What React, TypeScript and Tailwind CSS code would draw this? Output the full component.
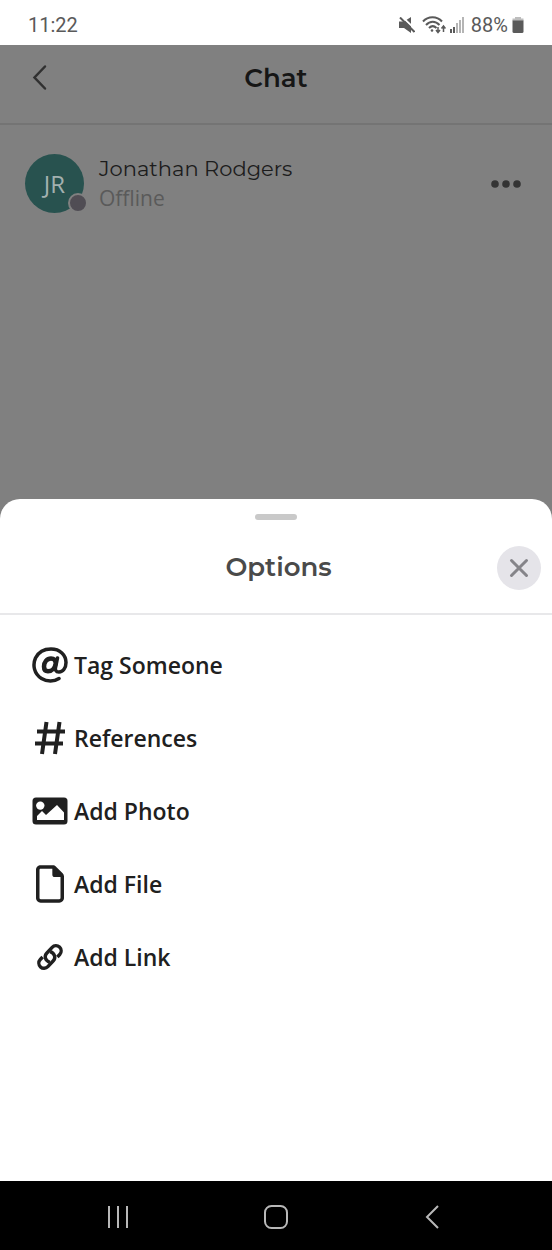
import type { ReactNode } from "react";
import { FaRegFile } from "react-icons/fa6";

type Option = {
  label: string;
  icon: ReactNode;
};

const options: Option[] = [
  {
    label: "Tag Someone",
    icon: (
      <svg className="size-9" viewBox="0 0 36 36" fill="none" stroke="currentColor" strokeLinecap="round">
        <path d="M27 31.500C22 34.800 15 34.800 9.500 31.500C2 27 .4 18 3.500 11C7 4 13 2 19 2C28 2 34 8 34 15.500C34 21 31 25 27 25C23.500 25 23 22.500 23.600 20L25.500 11" strokeWidth="3.500" />
        <path d="M23.800 16C23.600 13 22 11.500 19 11.500C14.800 11.500 12 15.300 12 19.500C12 22.600 13.600 24.300 16 24.300C20 24.300 23 21 23.800 16Z" strokeWidth="4.500" />
      </svg>
    ),
  },
  {
    label: "References",
    icon: (
      <svg className="h-9 w-8" viewBox="0 0 32 36" fill="none" stroke="currentColor" strokeWidth="4">
        <path d="M12.500 2 8 34M25.500 2 21 34M3 11.500H31M1 23.500H29" />
      </svg>
    ),
  },
  {
    label: "Add Photo",
    icon: (
      <svg className="h-7 w-9" viewBox="0 0 36 28">
        <rect x="0.5" y="0.5" width="35" height="27" rx="3.500" fill="currentColor" />
        <circle cx="8.300" cy="8.600" r="4.200" fill="#fff" />
        <path d="M5 23v-4l5-5 4 4L25 8l7 7.500V23z" fill="#fff" />
      </svg>
    ),
  },
  { label: "Add File", icon: <FaRegFile className="h-[38px] w-7" /> },
  {
    label: "Add Link",
    icon: (
      <svg className="size-7" viewBox="0 0 28 28" fill="none" stroke="currentColor" strokeWidth="3.400">
        <g transform="rotate(-47 14 14)">
          <path d="M10 17.500C8 13 10.500 9 14.500 9H22.500a5.200 5.200 0 0 1 0 10.400H19" />
          <path d="M18 10.500C20 15 17.500 19 13.500 19H5.500a5.200 5.200 0 0 1 0-10.400H9" />
        </g>
      </svg>
    ),
  },
];

function StatusBar() {
  return (
    <div className="flex h-[45px] shrink-0 items-center justify-between bg-white px-7 pt-1 font-[Roboto,sans-serif] text-xl text-[#5a5a5a]">
      <span>11:22</span>
      <div className="flex items-center">
        <svg className="mr-[7px] h-4 w-4" viewBox="0 0 16 16" fill="currentColor">
          <path d="M0 4.500h5L12 0v16l-7-5H0z" />
          <path d="M3.500 0 17 13" stroke="#fff" strokeWidth="1.800" />
          <path d="M1 .5 15.500 15" stroke="currentColor" strokeWidth="2" />
        </svg>
        <svg className="mr-1 h-[18px] w-6" viewBox="0 0 24 18" fill="none" stroke="currentColor" strokeWidth="2">
          <path d="M1 5.500C6-.2 15-.2 20 5.500M4 9c4-4.300 9.500-4.300 13.500 0M7 12c2.500-2.500 5-2.500 7.500 0" />
          <circle cx="10" cy="14.500" r="1.300" fill="currentColor" stroke="none" />
          <path d="M16 11v5M14 14l2 2.500 2-2.500M21.500 16v-6M19.500 12.500l2-2.500 2 2.500" strokeWidth="1.500" />
        </svg>
        <svg className="mr-[7px] h-4 w-[14px]" viewBox="0 0 14 16" fill="currentColor">
          <path d="M0 12h2v4H0zM3 10h2v6H3z" />
          <path d="M6 6h2v10H6zM9 3h2v13H9zM12 0h2v16h-2z" opacity=".45" />
        </svg>
        <span>88%</span>
        <svg className="ml-1 h-4 w-3" viewBox="0 0 12 16" fill="currentColor">
          <path d="M3 0h6v1.500h2.500V4H.5V1.500H3z" opacity=".4" />
          <path d="M.5 3.500h11v11q0 1.500-1.500 1.500H2q-1.500 0-1.500-1.500z" />
        </svg>
      </div>
    </div>
  );
}

function Chat() {
  return (
    <main className="grow-2 basis-0">
      <header className="grid h-20 grid-cols-3 items-center border-b-2 border-[#747474] pb-3">
        <button aria-label="Back" className="ml-7 flex size-6 items-center justify-center text-[#303030]">
          <svg className="h-7 w-4" viewBox="0 0 16 28" fill="none" stroke="currentColor" strokeWidth="2.500" strokeLinecap="round">
            <path d="M13 2.500 2.500 13.500 13 24.500" />
          </svg>
        </button>
        <h1 className="text-center font-[Montserrat,Inter,sans-serif] text-[26px] font-semibold text-[#161616]">Chat</h1>
      </header>
      <section className="flex items-center px-[25px] pt-[29px]">
        <div className="relative flex size-[59px] items-center justify-center rounded-full bg-[#28524f] text-2xl text-[#a3b0af]">
          JR
          <span className="absolute -right-1 bottom-0 size-5 rounded-full border-2 border-[#808080] bg-[#504d54]" />
        </div>
        <div className="ml-[15px] flex-1">
          <h2 className="font-[Montserrat,Inter,sans-serif] text-[21px] leading-7 text-[#1c1c1c]">Jonathan Rodgers</h2>
          <p className="text-[21px] leading-[30px] text-[#5a5a5a]">Offline</p>
        </div>
        <button aria-label="More" className="mr-[6px] text-[#343434]">
          <svg className="h-2 w-[30px]" viewBox="0 0 30 8" fill="currentColor">
            <circle cx="4" cy="4" r="3.800" />
            <circle cx="15" cy="4" r="3.800" />
            <circle cx="26" cy="4" r="3.800" />
          </svg>
        </button>
      </section>
    </main>
  );
}

function OptionsSheet() {
  return (
    <section aria-labelledby="options-title" className="grow-3 basis-0 rounded-t-[20px] bg-white">
      <div className="flex h-[35px] justify-center pt-[15px]">
        <div className="h-[6px] w-[42px] rounded-full bg-[#c9c9c9]" />
      </div>
      <div className="flex h-[81px] items-center border-b-2 border-[#e8e8ea] pr-[11px] pb-3">
        <h2 id="options-title" className="ml-[60px] flex-1 text-center font-[Montserrat,Inter,sans-serif] text-[26px] font-semibold text-[#4a4a4a]">
          Options
        </h2>
        <button aria-label="Close" className="flex size-11 items-center justify-center rounded-full bg-[#e5e4e9] text-[#858489]">
          <svg className="size-5" viewBox="0 0 20 20" fill="none" stroke="currentColor" strokeWidth="3" strokeLinecap="round">
            <path d="m2.500 2.500 15 15M17.500 2.500l-15 15" />
          </svg>
        </button>
      </div>
      <ul className="px-8 pt-[13px] text-[#202020]">
        {options.map((option) => (
          <li key={option.label}>
            <button className="flex h-[73px] w-full items-center gap-[6px] text-[23px] font-semibold">
              <span className="flex w-9 justify-center">{option.icon}</span>
              {option.label}
            </button>
          </li>
        ))}
      </ul>
    </section>
  );
}

function NavBar() {
  return (
    <nav className="flex h-[69px] shrink-0 items-center justify-between bg-black px-[104px] pt-[2px] text-[#b8b8b8]">
      <button aria-label="Recent apps">
        <svg className="h-6 w-7" viewBox="0 0 28 24" stroke="currentColor" strokeWidth="2">
          <path d="M5 1v22M14 1v22M23 1v22" />
        </svg>
      </button>
      <button aria-label="Home">
        <svg className="size-6" viewBox="0 0 24 24" fill="none" stroke="currentColor" strokeWidth="2">
          <rect x="1" y="1" width="22" height="22" rx="6.500" />
        </svg>
      </button>
      <button aria-label="Back">
        <svg className="h-6 w-7" viewBox="0 0 28 24" fill="none" stroke="currentColor" strokeWidth="2">
          <path d="M18 1 7 12l11 11" />
        </svg>
      </button>
    </nav>
  );
}

export default function App() {
  return (
    <div className="flex min-h-screen flex-col bg-[#808080] font-['Open_Sans',sans-serif]">
      <StatusBar />
      <Chat />
      <OptionsSheet />
      <NavBar />
    </div>
  );
}
